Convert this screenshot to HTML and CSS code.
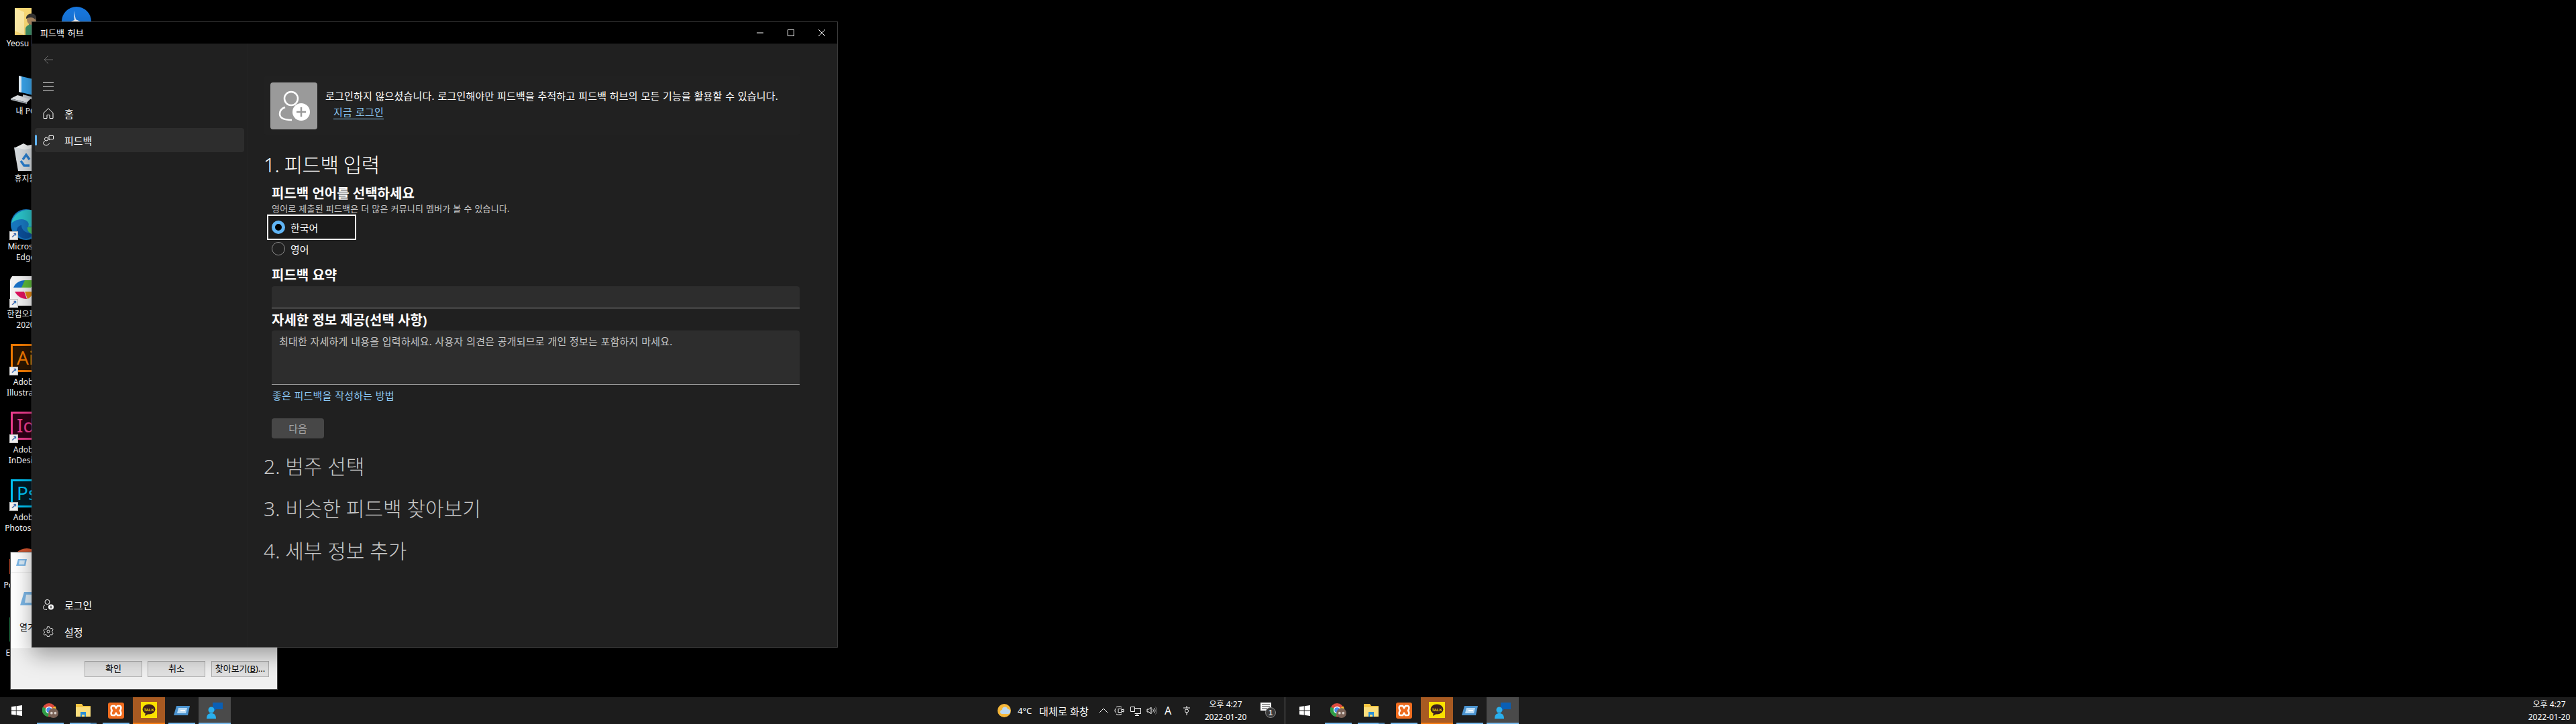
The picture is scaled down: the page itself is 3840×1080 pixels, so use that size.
FILE: index.html
```html
<!DOCTYPE html>
<html lang="ko">
<head>
<meta charset="utf-8">
<title>피드백 허브</title>
<link rel="stylesheet" href="styles.css">
</head>
<body>
<div class="screen">
  <main class="desktop">
    <div class="desk-icons">
      <div class="desk-item">
        <svg class="desk-svg" viewBox="0 0 48 48"><path d="M8 4h25v40H8z" fill="#f7d774"/><path d="M8 4l14 6v34L8 38z" fill="#fbe9a6"/><path d="M30 16c5-1 9 3 8 8l-1 5c3 1 5 3 5 6v9H24v-9c0-3 3-5 5-6z" fill="#3d8f68"/><ellipse cx="33" cy="21" rx="7" ry="8" fill="#a5835f"/><path d="M25 20c-1-8 12-11 15-3l-1 5c-3-5-9-5-14-2z" fill="#333"/></svg>
        <span class="desk-label">Yeosu Lee</span>
      </div>
      <div class="desk-item">
        <svg class="desk-svg" viewBox="0 0 48 48"><path d="M14 4l34 8v24L14 28z" fill="#3aa6ee"/><path d="M14 4l4 1v24l-4-1z" fill="#e6f2fb"/><path d="M2 38l10-5 20 5-6 6z" fill="#dfe3e6"/><path d="M2 38l24 6v2L2 40z" fill="#aab2b8"/><path d="M20 32l20 5-4 3-16-4z" fill="#c4ccd2"/></svg>
        <span class="desk-label">내 PC</span>
      </div>
      <div class="desk-item">
        <svg class="desk-svg" viewBox="0 0 48 48"><path d="M7 10l34-2-4 37H13z" fill="#d9dee2"/><path d="M9 10l12-6 6 3 10-2 2 5-16 3z" fill="#f2f4f5"/><g fill="none" stroke="#2a7fd0" stroke-width="3.5"><path d="M20 28l5-7 5 7"/><path d="M17 30l5 7h8"/></g></svg>
        <span class="desk-label">휴지통</span>
      </div>
      <div class="desk-item">
        <svg class="desk-svg" viewBox="0 0 48 48"><circle cx="25" cy="24" r="23" fill="#1878c0"/><path d="M3 22C6 8 18 2 28 2c11 0 19 8 19 19v6H28c3-6-3-11-10-11-7 0-13 4-15 6z" fill="#2bc3c9"/><path d="M18 25c0 8 8 14 20 11-4 6-10 10-16 9-9-2-13-10-10-16 1-2 4-4 6-4z" fill="#0b4f9a"/><path d="M27 28h20l-2 8-10 3c-5-2-9-6-8-11z" fill="#46c66a"/></svg>
        <span class="shortcut"></span>
        <span class="desk-label">Microsoft<br>Edge</span>
      </div>
      <div class="desk-item">
        <svg class="desk-svg" viewBox="0 0 48 48"><rect x="1" y="-2" width="46" height="46" rx="9" fill="#f4f4f4"/><path d="M6 17c3-7 9-11 18-11l-4 11z" fill="#1872c8"/><path d="M18 17l5-11h16l-7 11z" fill="#5dbb3a"/><path d="M8 23h14l4 11c-8 0-14-4-18-11z" fill="#e0135f"/><path d="M23 23h12c-1 6-4 9-8 11z" fill="#e68a12"/></svg>
        <span class="shortcut"></span>
        <span class="desk-label">한컴오피스<br>2020</span>
      </div>
      <div class="desk-item">
        <div class="adobe adobe-ai">Ai</div>
        <span class="shortcut"></span>
        <span class="desk-label">Adobe<br>Illustrator</span>
      </div>
      <div class="desk-item">
        <div class="adobe adobe-id">Id</div>
        <span class="shortcut"></span>
        <span class="desk-label">Adobe<br>InDesign</span>
      </div>
      <div class="desk-item">
        <div class="adobe adobe-ps">Ps</div>
        <span class="shortcut"></span>
        <span class="desk-label">Adobe<br>Photoshop</span>
      </div>
      <div class="desk-item">
        <svg class="desk-svg" viewBox="0 0 48 48"><circle cx="26" cy="24" r="22" fill="#d2552f"/><rect x="0" y="18" width="20" height="22" fill="#b7472a"/></svg>
        <span class="desk-label">PowerPoint</span>
      </div>
      <div class="desk-item">
        <svg class="desk-svg" viewBox="0 0 48 48"><rect x="0" y="4" width="48" height="36" fill="#217346"/></svg>
        <span class="desk-label">Excel 2016</span>
      </div>
      <div class="desk-item desk-item-second">
        <svg class="desk-svg" viewBox="0 0 48 48"><circle cx="24" cy="24" r="22" fill="#1877dd"/><path d="M20 8l3 13 9 4H13l8-3z" fill="#fff"/></svg>
        <span class="desk-label">Bitwarden</span>
      </div>
    </div>

    <section class="dialog">
      <div class="dialog-title">
        <svg class="run-icon-small" viewBox="0 0 16 12"><path d="M3 1h13l-2 10H0z" fill="#7db8e8"/><path d="M5 3h8l-1 6H4z" fill="#d9ecfa"/></svg>
      </div>
      <div class="dialog-body">
        <svg class="run-icon-large" viewBox="0 0 32 22"><path d="M8 1h24l-4 20H2z" fill="#7db8e8"/><path d="M11 5h15l-2 12H9z" fill="#e2f1fc"/></svg>
        <span class="dialog-open">열기</span>
      </div>
      <div class="dialog-actions">
        <span class="dialog-btn">확인</span>
        <span class="dialog-btn">취소</span>
        <span class="dialog-btn dialog-btn-browse">찾아보기(<u>B</u>)...</span>
      </div>
    </section>

    <section class="window">
      <header class="titlebar">
        <span class="title-text">피드백 허브</span>
        <div class="controls">
          <svg class="control" viewBox="0 0 10 10"><path d="M0 5h10" stroke="#fff" fill="none"/></svg>
          <svg class="control" viewBox="0 0 10 10"><rect x=".5" y=".5" width="9" height="9" stroke="#fff" fill="none"/></svg>
          <svg class="control" viewBox="0 0 10 10"><path d="M0 0l10 10M10 0L0 10" stroke="#fff" fill="none"/></svg>
        </div>
      </header>
      <div class="win-body">
        <nav class="sidebar">
          <div class="nav-back">
            <svg class="nav-icon" viewBox="0 0 16 16"><path d="M15 8H2M8 2L2 8l6 6" stroke="#6a6a6a" fill="none"/></svg>
          </div>
          <div class="nav-ham">
            <svg class="nav-icon" viewBox="0 0 16 16"><path d="M0 2.5h16M0 8.5h16M0 13.5h16" stroke="#e0e0e0" fill="none"/></svg>
          </div>
          <div class="nav-row">
            <svg class="nav-icon" viewBox="0 0 16 16"><path d="M1 7.5L8 .8l7 6.7v8h-5v-5H6v5H1z" stroke="#fff" fill="none"/></svg>
            <span>홈</span>
          </div>
          <div class="nav-row nav-selected">
            <span class="nav-indicator"></span>
            <svg class="nav-icon" viewBox="0 0 16 16"><circle cx="5" cy="6.5" r="2.5" stroke="#fff" fill="none"/><path d="M9 1.5h6.500v5H11l-2 1.500z" stroke="#fff" fill="none"/><path d="M3 9.500C1 10 .5 11.500.5 12.500c0 2 2 3 4.500 3s4-1 4.500-3" stroke="#fff" fill="none"/></svg>
            <span>피드백</span>
          </div>
          <div class="nav-row nav-login">
            <svg class="nav-icon" viewBox="0 0 16 16"><circle cx="6.500" cy="4" r="3.500" stroke="#fff" fill="none"/><path d="M3 8.500C1 9.500.5 11 .5 12.500.5 14.500 2 15.500 6 15.500" stroke="#fff" fill="none"/><circle cx="12" cy="11.500" r="4" fill="#fff"/><path d="M12 9.500v4M10 11.500h4" stroke="#202020" fill="none"/></svg>
            <span>로그인</span>
          </div>
          <div class="nav-row">
            <svg class="nav-icon" viewBox="0 0 16 16"><path d="M6.500.8h3l.5 2 1.700 1 2-.6 1.500 2.600-1.500 1.400v2l1.500 1.400-1.500 2.600-2-.6-1.700 1-.5 2h-3l-.5-2-1.700-1-2 .6L.8 11.600l1.500-1.400v-2L.8 6.800l1.500-2.600 2 .6 1.700-1z" stroke="#ddd" fill="none"/><circle cx="8" cy="8" r="2" stroke="#ddd" fill="none"/></svg>
            <span>설정</span>
          </div>
        </nav>
        <div class="content">
          <div class="banner">
            <div class="banner-icon">
              <svg class="banner-svg" viewBox="0 0 48 48"><circle cx="20" cy="13" r="10" stroke="#fff" stroke-width="2.500" fill="none"/><path d="M11 26C5 28 3 32 3 36c0 6 6 9 18 9" stroke="#fff" stroke-width="2.500" fill="none"/><circle cx="35" cy="33" r="13" fill="#fff"/><path d="M35 26v14M28 33h14" stroke="#9a9a9a" stroke-width="2.500" fill="none"/></svg>
            </div>
            <div class="banner-text">
              <p class="banner-msg">로그인하지 않으셨습니다. 로그인해야만 피드백을 추적하고 피드백 허브의 모든 기능을 활용할 수 있습니다.</p>
              <a class="banner-link">지금 로그인</a>
            </div>
          </div>

          <h1 class="step step-current">1. 피드백 입력</h1>
          <form class="form">
            <h2 class="field-title">피드백 언어를 선택하세요</h2>
            <p class="field-help">영어로 제출된 피드백은 더 많은 커뮤니티 멤버가 볼 수 있습니다.</p>
            <div class="radio radio-focus"><span class="radio-dot radio-on"></span><span>한국어</span></div>
            <div class="radio"><span class="radio-dot"></span><span>영어</span></div>
            <h2 class="field-title title-summary">피드백 요약</h2>
            <div class="input"></div>
            <h2 class="field-title title-detail">자세한 정보 제공(선택 사항)</h2>
            <div class="textarea">최대한 자세하게 내용을 입력하세요. 사용자 의견은 공개되므로 개인 정보는 포함하지 마세요.</div>
            <a class="help-link">좋은 피드백을 작성하는 방법</a>
            <span class="next-btn">다음</span>
          </form>
          <h1 class="step step-two">2. 범주 선택</h1>
          <h1 class="step">3. 비슷한 피드백 찾아보기</h1>
          <h1 class="step">4. 세부 정보 추가</h1>
        </div>
      </div>
    </section>
  </main>

  <footer class="taskbars">
    <div class="taskbar">
      <div class="tb-start"><svg class="win-logo" viewBox="0 0 16 16"><path d="M0 2.300l6.800-1v6.300H0zM7.600 1.200L16 0v7.600H7.600zM0 8.400h6.800v6.300l-6.800-1zM7.600 8.400H16V16l-8.400-1.200z" fill="#fff"/></svg></div>
      <div class="tb-app tb-run">
        <svg class="tb-svg" viewBox="0 0 26 24"><circle cx="11" cy="11" r="11" fill="#dd4b3e"/><path d="M11 11L21 5a11 11 0 0 1-6 16z" fill="#fbc02d"/><path d="M11 11l-1 11A11 11 0 0 1 1 6z" fill="#2e9e48"/><circle cx="11" cy="11" r="5" fill="#4a8df0" stroke="#fff" stroke-width="1.500"/><circle cx="18" cy="16" r="8" fill="#7a6257"/><circle cx="15" cy="16" r="2" fill="#d8cfc9"/><circle cx="21" cy="16" r="2" fill="#d8cfc9"/></svg>
      </div>
      <div class="tb-app tb-run tb-multi">
        <svg class="tb-svg" viewBox="0 0 24 22"><path d="M1 1h9l2 3h11v16H1z" fill="#f5c542"/><path d="M1 6h22v14H1z" fill="#fbdf7e"/><path d="M8 13h8v7h-2v-3h-4v3H8z" fill="#2a8fd8"/></svg>
      </div>
      <div class="tb-app tb-run">
        <svg class="tb-svg" viewBox="0 0 24 24"><rect width="24" height="24" rx="3" fill="#ef6c1f"/><path d="M7 5h3l2 3 2-3h3c3 0 3 4 1 7 2 3 2 7-1 7h-3l-2-3-2 3H7c-3 0-3-4-1-7-2-3-2-7 1-7z" fill="none" stroke="#fff" stroke-width="2.500"/></svg>
      </div>
      <div class="tb-app tb-kakao">
        <svg class="tb-svg" viewBox="0 0 24 24"><rect width="24" height="24" fill="#fae100"/><ellipse cx="12" cy="11" rx="9.500" ry="7.500" fill="#3c1e1e"/><path d="M7 16l-1 5 5-3z" fill="#3c1e1e"/><text x="12" y="13.500" class="talk">TALK</text></svg>
      </div>
      <div class="tb-app tb-run">
        <svg class="tb-svg" viewBox="0 0 24 24"><path d="M4 5h20l-3 14H0z" fill="#4b93cf"/><path d="M7 8h13l-2 8H5z" fill="#b9dcf6"/><path d="M10 11h7v2h-7z" fill="#fff"/></svg>
      </div>
      <div class="tb-app tb-run tb-active">
        <svg class="tb-svg" viewBox="0 0 24 24"><path d="M9 0h15v10H14l-3 3v-3H9z" fill="#0a5fb4"/><circle cx="7" cy="11" r="4.500" fill="#29b0ee"/><path d="M0 24c0-6 3-8 7-8s7 2 7 8z" fill="#29b0ee"/></svg>
      </div>
      <div class="tray">
        <svg class="weather" viewBox="0 0 20 20"><circle cx="10" cy="10" r="10" fill="#f5b73a"/><path d="M7 15a3 3 0 0 1 0-6 4 4 0 0 1 8-1 3.500 3.500 0 0 1 1 7z" fill="#bcd8f0"/></svg>
        <span class="temp">4°C</span>
        <span class="sky">대체로 화창</span>
        <span class="tray-icon"><svg class="tray-svg" viewBox="0 0 16 16"><path d="M2 11l6-6 6 6" stroke="#fff" fill="none"/></svg></span>
        <span class="tray-icon"><svg class="tray-svg" viewBox="0 0 16 16"><path d="M3 3c1-1.500 6-1.500 8 0M3 13c1 1.500 6 1.500 8 0M3 4.500a4 4 0 0 0 0 7" stroke="#fff" fill="none"/><rect x="6" y="5.500" width="5" height="5" stroke="#fff" fill="none"/><path d="M11 7l3-1v4l-3-1" stroke="#fff" fill="none"/></svg></span>
        <span class="tray-icon"><svg class="tray-svg" viewBox="0 0 16 16"><path d="M.5 2.500h6v7h-6zM6.500 4.500h9v8h-9M7 15.500h6M10 12.500v3" stroke="#fff" fill="none"/></svg></span>
        <span class="tray-icon"><svg class="tray-svg" viewBox="0 0 16 16"><path d="M1 6h3l3-3v10l-3-3H1z" stroke="#fff" fill="none"/><path d="M9.500 5.500a4 4 0 0 1 0 5M11.500 4a6 6 0 0 1 0 8" stroke="#ddd" fill="none"/><path d="M13.500 2.500a8 8 0 0 1 0 11" stroke="#777" fill="none"/></svg></span>
        <span class="tray-icon tray-letter">A</span>
        <span class="tray-icon tray-ime"><svg class="tray-svg" viewBox="0 0 16 16"><path d="M3 4h10M8 1v3" stroke="#fff" fill="none"/><circle cx="8" cy="8.500" r="2.500" stroke="#fff" fill="none"/><path d="M8 11v4" stroke="#fff" fill="none"/></svg></span>
        <div class="clock clock-first"><span>오후 4:27</span><span>2022-01-20</span></div>
        <svg class="notify" viewBox="0 0 24 24"><path d="M0 0h16v12h-5l-3 3v-3H0z" fill="#fff"/><path d="M2 3h12M2 6h12M2 9h8" stroke="#333" fill="none"/><circle cx="15" cy="15" r="7.500" fill="#3a3a3a" stroke="#888"/><text x="15" y="19" class="notify-num">1</text></svg>
        <span class="show-desktop"></span>
      </div>
    </div>
    <div class="taskbar">
      <div class="tb-start"><svg class="win-logo" viewBox="0 0 16 16"><path d="M0 2.300l6.800-1v6.300H0zM7.600 1.200L16 0v7.600H7.600zM0 8.400h6.800v6.300l-6.800-1zM7.600 8.400H16V16l-8.400-1.200z" fill="#fff"/></svg></div>
      <div class="tb-app tb-run">
        <svg class="tb-svg" viewBox="0 0 26 24"><circle cx="11" cy="11" r="11" fill="#dd4b3e"/><path d="M11 11L21 5a11 11 0 0 1-6 16z" fill="#fbc02d"/><path d="M11 11l-1 11A11 11 0 0 1 1 6z" fill="#2e9e48"/><circle cx="11" cy="11" r="5" fill="#4a8df0" stroke="#fff" stroke-width="1.500"/><circle cx="18" cy="16" r="8" fill="#7a6257"/><circle cx="15" cy="16" r="2" fill="#d8cfc9"/><circle cx="21" cy="16" r="2" fill="#d8cfc9"/></svg>
      </div>
      <div class="tb-app tb-run tb-multi">
        <svg class="tb-svg" viewBox="0 0 24 22"><path d="M1 1h9l2 3h11v16H1z" fill="#f5c542"/><path d="M1 6h22v14H1z" fill="#fbdf7e"/><path d="M8 13h8v7h-2v-3h-4v3H8z" fill="#2a8fd8"/></svg>
      </div>
      <div class="tb-app tb-run">
        <svg class="tb-svg" viewBox="0 0 24 24"><rect width="24" height="24" rx="3" fill="#ef6c1f"/><path d="M7 5h3l2 3 2-3h3c3 0 3 4 1 7 2 3 2 7-1 7h-3l-2-3-2 3H7c-3 0-3-4-1-7-2-3-2-7 1-7z" fill="none" stroke="#fff" stroke-width="2.500"/></svg>
      </div>
      <div class="tb-app tb-kakao">
        <svg class="tb-svg" viewBox="0 0 24 24"><rect width="24" height="24" fill="#fae100"/><ellipse cx="12" cy="11" rx="9.500" ry="7.500" fill="#3c1e1e"/><path d="M7 16l-1 5 5-3z" fill="#3c1e1e"/><text x="12" y="13.500" class="talk">TALK</text></svg>
      </div>
      <div class="tb-app tb-run">
        <svg class="tb-svg" viewBox="0 0 24 24"><path d="M4 5h20l-3 14H0z" fill="#4b93cf"/><path d="M7 8h13l-2 8H5z" fill="#b9dcf6"/><path d="M10 11h7v2h-7z" fill="#fff"/></svg>
      </div>
      <div class="tb-app tb-run tb-active">
        <svg class="tb-svg" viewBox="0 0 24 24"><path d="M9 0h15v10H14l-3 3v-3H9z" fill="#0a5fb4"/><circle cx="7" cy="11" r="4.500" fill="#29b0ee"/><path d="M0 24c0-6 3-8 7-8s7 2 7 8z" fill="#29b0ee"/></svg>
      </div>
      <div class="tray">
        <div class="clock clock-second"><span>오후 4:27</span><span>2022-01-20</span></div>
      </div>
    </div>
  </footer>
</div>
</body>
</html>
```
FILE: styles.css
```css
* { box-sizing: border-box; }
html, body { margin: 0; padding: 0; background: #000; }
body { font-family: "Noto Sans", "Noto Sans CJK KR", sans-serif; color: #fff; font-size: 14px; }
h1, h2, p { margin: 0; }

.screen { width: 3840px; height: 1080px; display: flex; flex-direction: column; overflow: hidden; }
.desktop { position: relative; flex: 1; background: #000; overflow: hidden; }

/* desktop icons */
.desk-icons {
  display: grid;
  grid-template-rows: repeat(10, 101px);
  grid-auto-columns: 76px;
  grid-auto-flow: column;
  padding-top: 2px;
}
.desk-item { position: relative; padding-top: 6px; display: flex; flex-direction: column; align-items: center; }
.desk-item-second { grid-column: 2; grid-row: 1; }
.desk-svg { display: block; width: 48px; height: 48px; }
.desk-label { margin-top: 1px; width: 76px; font-size: 12px; line-height: 16px; text-align: center; white-space: nowrap; color: #fff; }
.shortcut {
  position: absolute; left: 14px; top: 40px; width: 13px; height: 13px;
  display: flex; align-items: center; justify-content: center;
  background: #f2f2f2; border: 1px solid #c4c4c4;
}
.shortcut::after { content: "↗"; font-family: "DejaVu Sans", sans-serif; font-size: 11px; line-height: 11px; font-weight: 700; color: #3b6cb0; }
.adobe {
  align-self: flex-start; width: 46px; height: 42px; margin: 0 0 6px 16px; padding-left: 6px;
  border: 3px solid;
  font-size: 28px; line-height: 35px;
}
.adobe-ai { border-color: #f47b00; background: #2b1500; color: #f47b00; }
.adobe-id { border-color: #ee3d8f; background: #2c0015; color: #ee3d8f; }
.adobe-ps { border-color: #00c3f5; background: #001924; color: #00c3f5; }

/* background dialog */
.dialog {
  position: absolute; left: 15px; top: 823px; width: 399px; height: 206px;
  background: #f0f0f0; border: 1px solid #444; color: #000;
  display: flex; flex-direction: column;
}
.dialog-title { height: 31px; background: #fff; border-bottom: 1px solid #e4e4e4; padding: 9px 0 0 8px; }
.run-icon-small { display: block; width: 16px; height: 12px; }
.dialog-body { height: 112px; background: #fff; padding: 27px 0 0 12px; position: relative; }
.run-icon-large { display: block; width: 32px; height: 22px; }
.dialog-open { position: absolute; left: 13px; top: 71px; font-size: 13px; line-height: 18px; }
.dialog-actions { display: flex; margin-top: 19px; padding-left: 110px; }
.dialog-btn {
  width: 86px; height: 24px; margin-right: 8px; background: #e1e1e1; border: 1px solid #adadad;
  font-size: 13px; line-height: 20px; text-align: center; white-space: nowrap;
}
.dialog-btn-browse { margin-left: 1px; margin-right: 0; }

/* main window */
.window {
  position: absolute; left: 47px; top: 32px; width: 1202px; height: 934px;
  background: #202020; border: 1px solid #3a3a3a; border-bottom-color: #4a4a4a;
  box-shadow: 0 12px 30px rgba(0,0,0,.35);
  display: flex; flex-direction: column;
}
.titlebar { height: 32px; flex: none; background: #000; display: flex; align-items: center; justify-content: space-between; padding-left: 12px; }
.title-text { font-size: 13px; line-height: 32px; color: #fff; word-spacing: 1px; letter-spacing: .1px; }
.controls { display: flex; gap: 36px; padding-right: 18px; }
.control { width: 10px; height: 10px; display: block; }
.win-body { flex: 1; display: flex; min-height: 0; }

/* sidebar */
.sidebar { width: 321px; flex: none; display: flex; flex-direction: column; padding: 0 4px 1px; border-right: 1px solid #232323; }
.nav-icon { width: 16px; height: 16px; display: block; flex: none; }
.nav-back { height: 48px; display: flex; align-items: center; padding-left: 12px; }
.nav-ham { height: 32px; display: flex; align-items: center; padding-left: 12px; margin-bottom: 6px; }
.nav-row {
  position: relative; height: 36px; width: 312px; margin-bottom: 4px;
  display: flex; align-items: center; gap: 16px; padding-left: 12px;
  font-size: 15px; letter-spacing: -.1px; border-radius: 4px; color: #fff;
}
.nav-selected { background: #2d2d2d; }
.nav-indicator { position: absolute; left: 0; top: 10px; width: 3px; height: 16px; border-radius: 2px; background: #60b4f4; }
.nav-login { margin-top: auto; }

/* content */
.content { flex: 1; padding: 48px 0 0 24px; min-width: 0; }
.banner { width: 800px; height: 88px; background: #212121; border-radius: 4px; padding: 10px; display: flex; gap: 12px; }
.banner-icon { width: 70px; height: 70px; background: #9a9a9a; border-radius: 4px; display: flex; align-items: center; justify-content: center; flex: none; }
.banner-svg { width: 48px; height: 48px; display: block; }
.banner-text { padding-top: 10px; }
.banner-msg { font-size: 15px; line-height: 20px; white-space: nowrap; letter-spacing: .2px; word-spacing: .5px; }
.banner-link { display: inline-block; margin: 5px 0 0 12px; font-size: 15px; line-height: 19px; letter-spacing: .2px; word-spacing: 1px; color: #8cc8f4; border-bottom: 1px solid #8cc8f4; }

.step { height: 40px; line-height: 40px; font-size: 30px; font-weight: 300; color: #c9c9c9; margin-top: 23px; white-space: nowrap; }
.step-current { color: #fff; margin-top: 25px; letter-spacing: -.6px; }
.step-two { margin-top: 22px; }

.form { margin-left: 12px; width: 787px; display: flex; flex-direction: column; align-items: flex-start; }
.field-title { font-size: 20px; line-height: 28px; font-weight: 700; color: #fff; margin-top: 9px; white-space: nowrap; }
.field-help { font-size: 13px; line-height: 17px; letter-spacing: .2px; word-spacing: .3px; color: #c8c8c8; white-space: nowrap; }
.radio { height: 26px; display: flex; align-items: center; gap: 8px; padding-left: 0; font-size: 15px; }
.radio-focus { width: 133px; height: 38px; margin-left: -7px; padding-left: 5px; border: 2px solid #fff; background: #1a1a1a; }
.radio-dot { width: 20px; height: 20px; border-radius: 50%; border: 1px solid #8a8a8a; flex: none; }
.radio-on { border: 5px solid #60b4f4; background: #000; }
.title-summary { margin-top: 13px; }
.input { width: 787px; height: 33px; margin-top: 2px; background: #2d2d2d; border-bottom: 1px solid #9a9a9a; border-radius: 4px 4px 0 0; }
.title-detail { margin-top: 4px; }
.textarea { width: 787px; height: 81px; margin-top: 1px; padding: 6px 11px; background: #2d2d2d; border-bottom: 1px solid #9a9a9a; border-radius: 4px 4px 0 0; font-size: 15px; line-height: 20px; letter-spacing: .2px; word-spacing: .5px; color: #c4c4c4; white-space: nowrap; }
.help-link { margin: 6px 0 0 1px; font-size: 15px; line-height: 20px; letter-spacing: .2px; word-spacing: .5px; color: #8cc8f4; white-space: nowrap; }
.next-btn { margin-top: 24px; width: 78px; height: 30px; background: #474747; border-radius: 4px; font-size: 15px; line-height: 30px; text-align: center; color: #a8a8a8; }

/* taskbars */
.taskbars { height: 40px; flex: none; display: flex; }
.taskbar { width: 1920px; height: 40px; background: #1c1c1c; display: flex; gap: 1px; align-items: stretch; }
.tb-start { width: 50px; display: flex; align-items: center; justify-content: center; }
.win-logo { width: 16px; height: 16px; display: block; }
.tb-app { position: relative; width: 48px; display: flex; align-items: center; justify-content: center; }
.tb-svg { width: 24px; height: 24px; display: block; }
.tb-run::after { content: ""; position: absolute; left: 4px; right: 4px; bottom: 0; height: 2px; background: #76b9ed; }
.tb-multi::before { content: ""; position: absolute; left: 35px; right: 4px; bottom: 0; height: 2px; background: #4a7ea8; z-index: 1; }
.tb-kakao { background: #a85a22; border-bottom: 2px solid #f57a10; }
.tb-active { background: #4a4a4a; }
.tb-active::after { left: 0; right: 0; }
.talk { font-family: "Liberation Sans", sans-serif; font-size: 6px; font-weight: 700; fill: #fae100; text-anchor: middle; }

.tray { margin-left: auto; display: flex; align-items: center; font-size: 12px; }
.weather { width: 20px; height: 20px; display: block; }
.temp { margin-left: 10px; font-size: 13px; width: 32px; }
.sky { width: 73px; white-space: nowrap; font-size: 15px; letter-spacing: .2px; margin-right: 11px; }
.tray-icon { width: 24px; height: 40px; display: flex; align-items: center; justify-content: center; }
.tray-svg { width: 16px; height: 16px; display: block; }
.tray-letter { font-size: 16px; }
.tray-ime { margin-left: 4px; }
.clock { display: flex; flex-direction: column; align-items: center; width: 66px; font-size: 12px; line-height: 19px; color: #fff; white-space: nowrap; }
.clock-first { margin-left: 13px; }
.clock-second { margin-right: 7px; }
.notify { width: 24px; height: 24px; display: block; margin-left: 19px; }
.notify-num { font-family: "Liberation Sans", sans-serif; font-size: 11px; font-weight: 700; fill: #ddd; text-anchor: middle; }
.show-desktop { width: 1px; height: 40px; background: #6a6a6a; margin-left: 12px; margin-right: 4px; }
```
